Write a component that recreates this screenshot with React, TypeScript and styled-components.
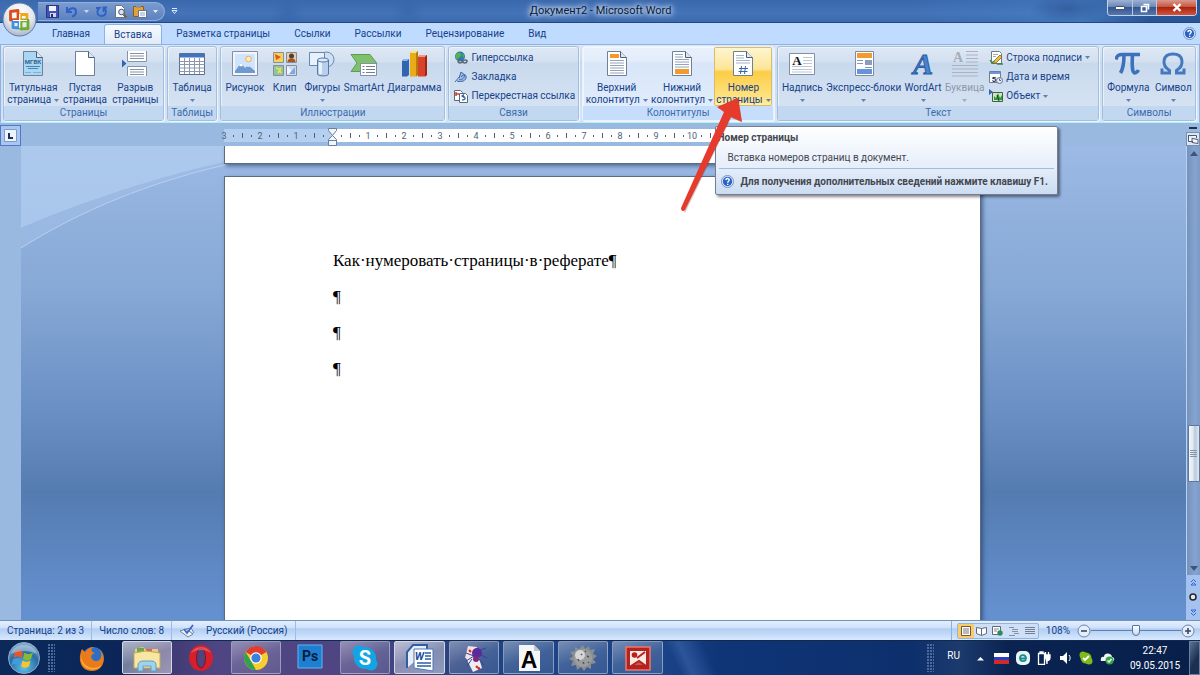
import React from "react";
import styled, { createGlobalStyle, css } from "styled-components";

const Global = createGlobalStyle`
  *, *::before, *::after { box-sizing: border-box; }
  body { margin: 0; background: #6a8fc6; font: 10px/12px Roboto, "Open Sans", sans-serif; color: #15428b; }
  button { font: inherit; color: inherit; background: none; border: 0; padding: 0; margin: 0; cursor: default; }
  a { color: inherit; text-decoration: none; }
  svg { display: block; flex: none; }
`;

/* ---------- window frame ---------- */

const Window = styled.div`
  display: flex;
  flex-direction: column;
  min-height: 100vh;
  overflow: hidden;
`;

const TitleBar = styled.header`
  position: relative;
  display: flex;
  align-items: center;
  height: 23px;
  padding-left: 38px;
  border-bottom: 1px solid #26477c;
  background:
    radial-gradient(ellipse 18px 14px at 24% 60%, #2f5da266, transparent),
    radial-gradient(ellipse 18px 14px at 34% 50%, #2f5da266, transparent),
    radial-gradient(ellipse 40px 14px at 89% 40%, #284f8c99, transparent),
    linear-gradient(90deg, transparent 76%, #4a8ad055 90%, #173e7a88 96%),
    linear-gradient(#3a68ad, #4473b8 60%, #3b69ae);
`;

const OfficeButton = styled.button`
  position: absolute;
  z-index: 3;
  left: 2px;
  top: 2px;
  width: 35px;
  height: 35px;
`;

const QuickAccess = styled.div`
  display: flex;
  align-items: center;
  gap: 6px;
  height: 19px;
  padding: 0 6px 0 8px;
  border: 1px solid #92aede;
  border-left: 0;
  border-radius: 0 10px 10px 0;
  background: linear-gradient(#7c9cce, #5b82bf);
`;

const ToolButton = styled.button`
  display: grid;
  place-items: center;
`;

const Customize = styled(ToolButton)`
  margin-left: 6px;
`;

const Title = styled.h1`
  flex: 1;
  margin: 0 84px 0 0;
  font-size: 11px;
  line-height: 14px;
  font-weight: 400;
  text-align: center;
  color: #0a1a33;
  text-shadow: 0 0 4px #dce8ff, 0 0 6px #dce8ff, 0 0 8px #c5d8fa;
`;

const WindowControls = styled.div`
  display: flex;
  align-self: flex-start;
  margin-right: 3px;
  height: 16px;
  border: 1px solid #c3d3ea;
  border-top: 0;
  border-radius: 0 0 4px 4px;
  overflow: hidden;
`;

const ControlButton = styled.button<{ $wide?: boolean; $danger?: boolean }>`
  display: grid;
  place-items: center;
  width: ${(p) => (p.$wide ? 40 : 24)}px;
  border-left: 1px solid #b9c8df;
  background: ${(p) =>
    p.$danger
      ? "linear-gradient(#d9988c, #c7573f 45%, #a9240f 50%, #d4523b)"
      : "linear-gradient(#9db2d3, #6c88b8 45%, #35568f 50%, #5577ae)"};
  &:first-child { border-left: 0; }
`;

/* ---------- ribbon ---------- */

const TabRow = styled.nav`
  display: flex;
  align-items: stretch;
  height: 21px;
  padding: 0 4px 0 40px;
  background: #bfdbff;
`;

const Tab = styled.button<{ $active?: boolean }>`
  padding: 0 12px;
  line-height: 20px;
  white-space: nowrap;
  ${(p) =>
    p.$active &&
    css`
      position: relative;
      margin: 1px 2px 0;
      padding: 0 9px;
      border: 1px solid #8db2e3;
      border-bottom: 0;
      border-radius: 3px 3px 0 0;
      background: linear-gradient(#f6faff, #e1ebf8);
    `}
`;

const HelpButton = styled.button`
  margin-left: auto;
  align-self: center;
`;

const Ribbon = styled.div`
  display: flex;
  gap: 3px;
  height: 79px;
  padding: 1px 3px 1px 2px;
  border: 1px solid #8db2e3;
  border-bottom: 1px solid #b4f0f2;
  background: linear-gradient(#dbe6f4, #cfddf0 20%, #c8d9ee 22%, #d5e5f6);
`;

const GroupBox = styled.section<{ $w: number; $hot?: boolean }>`
  flex: ${(p) => p.$w} 1 0;
  min-width: 0;
  display: flex;
  flex-direction: column;
  border: 1px solid ${(p) => (p.$hot ? "#e8f2ff" : "#a3bfdf")};
  border-radius: 3px;
  box-shadow: inset 1px 1px 0 #ffffff88, 1px 1px 0 #ffffffaa;
  background: ${(p) =>
    p.$hot
      ? "linear-gradient(#e9f1fb, #e2ecfa 20%, #d8e6f9 22%, #e3eefb)"
      : "linear-gradient(#dee8f5, #d4e0f0 20%, #c9d9ed 22%, #d8e5f4)"};
`;

const GroupBody = styled.div`
  flex: 1;
  display: flex;
  padding: 0 1px;
`;

const GroupLabel = styled.h2<{ $hot?: boolean }>`
  margin: 0;
  font-size: 10px;
  line-height: 14px;
  font-weight: 400;
  text-align: center;
  color: #3e6aaa;
  background: ${(p) => (p.$hot ? "#c6defc" : "#c1d8f0")};
`;

const BigButton = styled.button<{ $w: number; $hot?: boolean; $off?: boolean }>`
  position: relative;
  flex: ${(p) => p.$w} 1 0;
  min-width: 0;
  display: flex;
  flex-direction: column;
  align-items: center;
  padding-top: 3px;
  white-space: nowrap;
  color: ${(p) => (p.$off ? "#8d97a8" : "inherit")};
  ${(p) =>
    p.$hot &&
    css`
      border-radius: 2px;
      box-shadow: inset 0 0 0 1px #d8bc6c;
      background: linear-gradient(#fdf6d2, #fde596 38%, #fccd45 42%, #fee58a 90%, #fff3b0);
    `}
`;

const Caption = styled.span`
  display: flex;
  flex-direction: column;
  align-items: center;
  margin-top: 5px;
`;

const CaptionLine = styled.span`
  display: flex;
  align-items: center;
  justify-content: center;
  gap: 3px;
  height: 12px;
`;

const SmallList = styled.div<{ $w: number }>`
  flex: ${(p) => p.$w} 1 0;
  min-width: 0;
  display: flex;
  flex-direction: column;
  justify-content: space-around;
  padding: 1px 0 0 4px;
`;

const SmallButton = styled.button`
  display: flex;
  align-items: center;
  gap: 3px;
  white-space: nowrap;
`;

const HoverAnchor = styled.div<{ $w: number }>`
  position: relative;
  flex: ${(p) => p.$w} 1 0;
  min-width: 0;
  display: flex;
`;

const Tooltip = styled.div`
  position: absolute;
  z-index: 5;
  top: 79px;
  left: 1px;
  width: 343px;
  padding: 5px 3px 0 1px;
  border: 1px solid #767f92;
  border-radius: 2px;
  box-shadow: 2px 2px 3px #00000077;
  background: linear-gradient(#ffffff, #e6eefa 60%, #cbdcf2);
  color: #45474f;
`;

const TipTitle = styled.strong`
  display: block;
  line-height: 12px;
`;

const TipText = styled.p`
  margin: 8px 0 0 10px;
  line-height: 12px;
`;

const TipFoot = styled.div`
  display: flex;
  align-items: center;
  gap: 6px;
  height: 26px;
  margin: 4px 0 0 2px;
  padding: 0 2px;
  border-top: 1px solid #a3bbdc;
  font-weight: 700;
  white-space: nowrap;
`;

const Pointer = styled.svg`
  position: absolute;
  z-index: 6;
  top: 50px;
  left: -35px;
  pointer-events: none;
`;

/* ---------- workspace ---------- */

const Workspace = styled.main`
  flex: 1;
  display: grid;
  grid-template-columns: 21px 1fr 14px;
  grid-template-rows: 23px 1fr;
  background: #9ab9e0;
`;

const Corner = styled.button`
  align-self: end;
  display: grid;
  place-items: center;
  height: 21px;
  border: 1px solid #5577c7;
  background: #a9c6ee;
`;

const RulerTrack = styled.div`
  display: flex;
  justify-content: center;
  align-items: center;
  padding: 2px 2px 0 0;
`;

const Ruler = styled.div`
  display: flex;
  align-items: center;
  width: 758px;
  height: 13px;
  background: linear-gradient(90deg, #b5cff0 108px, #ffffff 108px);
  color: #4d5f7a;
  font-size: 9px;
`;

const RulerCells = styled.div`
  position: relative;
  display: flex;
  margin-left: -4px;
`;

const Cell = styled.span`
  flex: none;
  display: grid;
  grid-template-columns: repeat(4, 9px);
  place-items: center;
`;

const Num = styled.span`
  display: flex;
  justify-content: center;
  width: 9px;
`;

const Tick = styled.i<{ $tall?: boolean }>`
  width: 1px;
  height: ${(p) => (p.$tall ? 5 : 2)}px;
  background: #50617c;
`;

const Indent = styled.svg`
  position: absolute;
  left: 108px;
  top: -2px;
`;

const SideRuler = styled.div`
  background: #9ab9e0;
`;

const Canvas = styled.div`
  position: relative;
  display: flex;
  flex-direction: column;
  align-items: center;
  gap: 12px;
  padding-right: 2px;
  overflow: hidden;
  background: linear-gradient(#9cbae5, #93b2de 12%, #87a9d6 30%, #6b90c5 55%, #557cb1 73%, #6490cf 98%);
`;

const Swoosh = styled.svg`
  position: absolute;
  left: 0;
  top: 0;
`;

const Sheet = styled.article<{ $tail?: boolean }>`
  position: relative;
  width: 757px;
  max-width: 100%;
  border: 1px solid #5c6b82;
  background: #fff;
  box-shadow: 2px 2px 4px #1d355e99;
  ${(p) =>
    p.$tail
      ? css`
          height: 18px;
          border-top: 0;
        `
      : css`
          flex: 1;
          border-bottom: 0;
          padding: 66px 108px 0;
        `}
`;

const Paragraph = styled.p`
  margin: 0;
  font: 17px/36px "Liberation Serif", serif;
  color: #000;
`;

const ScrollColumn = styled.div`
  display: flex;
  flex-direction: column;
  background: #a5c2ee;
`;

const ScrollTop = styled.div`
  display: flex;
  flex-direction: column;
  align-items: center;
  justify-content: flex-end;
  gap: 3px;
`;

const SplitBar = styled.i`
  width: 8px;
  height: 2px;
  background: #25324a;
`;

const RulerToggle = styled.button`
  display: grid;
  place-items: center;
  width: 14px;
  height: 14px;
  border: 1px solid #7c8fb0;
  background: #dbe6f5;
`;

const ScrollTrack = styled.div`
  flex: 1;
  display: flex;
  flex-direction: column;
  align-items: center;
  border-left: 1px solid #b9d2f2;
  background: linear-gradient(90deg, #7592bd, #85a3d0 60%, #7d9ac5);
`;

const Arrow = styled.button`
  display: grid;
  place-items: center;
  width: 13px;
  height: 14px;
`;

const Spacer = styled.i<{ $grow: number }>`
  flex: ${(p) => p.$grow} 1 0;
`;

const Thumb = styled.div`
  display: grid;
  place-items: center;
  width: 12px;
  height: 57px;
  border: 1px solid #5d779f;
  border-radius: 1px;
  background: linear-gradient(90deg, #f4f7fb, #dfe7f0 40%, #b9c8da 60%, #dfe9f4);
`;

const BrowseButtons = styled.div`
  display: flex;
  flex-direction: column;
  align-items: center;
  justify-content: space-around;
  height: 45px;
`;

/* ---------- status bar ---------- */

const StatusBar = styled.footer`
  display: flex;
  align-items: stretch;
  height: 20px;
  border-top: 1px solid #7290b8;
  background: linear-gradient(#e3efff, #cfe1fa 35%, #b1cef3 42%, #c7ddf9 75%, #d8e9ff);
`;

const StatusItem = styled.button`
  display: flex;
  align-items: center;
  padding: 0 7px;
  border-right: 1px solid #9dbde6;
  line-height: 18px;
`;

const StatusTools = styled.div`
  display: flex;
  align-items: center;
  margin-left: auto;
  padding: 0 5px;
  border-left: 1px solid #8fb0dc;
`;

const ViewButtons = styled.div`
  display: flex;
  border: 1px solid #93b4de;
  border-radius: 2px;
  background: #cfe0f6;
`;

const ViewButton = styled.button<{ $on?: boolean }>`
  display: grid;
  place-items: center;
  width: 16px;
  height: 14px;
  background: ${(p) => (p.$on ? "#fbcb6b" : "transparent")};
`;

const ZoomLevel = styled.button`
  margin: 0 7px;
`;

const ZoomSlider = styled.input`
  width: 90px;
  height: 14px;
  margin: 0;
  appearance: none;
  background: linear-gradient(#5f80b0, #5f80b0) center / 100% 1px no-repeat;
  &::-webkit-slider-thumb {
    appearance: none;
    width: 8px;
    height: 11px;
    border: 1px solid #56749f;
    border-radius: 1px 1px 4px 4px;
    background: linear-gradient(#fff, #c5d6ee);
  }
`;

/* ---------- taskbar ---------- */

const Taskbar = styled.div`
  display: flex;
  align-items: stretch;
  height: 35px;
  border-top: 1px solid #10294d;
  color: #fff;
  background:
    linear-gradient(65deg, transparent 56%, #3f68b088 57%, transparent 59%),
    linear-gradient(90deg, #0b2a5b, #0b2558 10%, #3b376f 13%, #4f4583 18%, #4f4583 30%, #31437f 36%, #1d4484 42%, #1c4488 55%, #0f3577 60%, #0d2f6c 76%, #1c3a6d 80%, #0a2351 84%, #081f4a);
`;

const StartButton = styled.button`
  width: 48px;
  display: grid;
  place-items: center;
`;

const Grip = styled.i`
  align-self: center;
  width: 7px;
  height: 28px;
  background: radial-gradient(circle at 1px 1px, #4c6a9c 1px, transparent 1px) 0 0 / 3px 3px;
`;

const TaskItems = styled.div`
  display: grid;
  grid-template-columns: repeat(11, 1fr);
  width: 50%;
  margin-left: 10px;
`;

const TaskButton = styled.button<{ $framed?: boolean; $lit?: boolean }>`
  display: grid;
  place-items: center;
  margin: 0 2px 1px;
  border-radius: 2px;
  border: 1px solid transparent;
  ${(p) =>
    p.$framed &&
    css`
      border-color: #a9b5d3aa;
      background: linear-gradient(160deg, #ffffff66, #ffffff2a 50%, #ffffff1c);
    `}
  ${(p) =>
    p.$lit &&
    css`
      border-color: #d3d6e6;
      background: linear-gradient(160deg, #ffffffa8, #ffffff66 50%, #ffffff77);
    `}
`;

const Tray = styled.div`
  display: flex;
  align-items: center;
  gap: 7px;
  margin-left: auto;
`;

const Language = styled.button`
  margin: 0 6px 4px;
`;

const Clock = styled.time`
  display: flex;
  flex-direction: column;
  align-items: center;
  width: 60px;
  margin: 0 -3px 0 3px;
  font-size: 10px;
  line-height: 15px;
`;

const ShowDesktop = styled.button`
  align-self: stretch;
  width: 11px;
  border: 1px solid #6b7f9e;
  background: linear-gradient(120deg, #5d7393, #1a2f52 60%);
`;

/* ---------- drawings ---------- */

const Caret = ({ c = "#5d82b8" }: { c?: string }) => (
  <svg width="5" height="3" viewBox="0 0 5 3"><path d="M0 0h5L2.500 3z" fill={c} /></svg>
);

const SheetShape = ({ fill = "#fff" }: { fill?: string }) => (
  <>
    <path d="M3.500 1.500h13l6 6v18h-19z" fill={fill} stroke="#6f8099" />
    <path d="M16.500 1.500v6h6" fill="#dfe7f2" stroke="#4d5d78" />
  </>
);

const Box26 = ({ children }: { children: React.ReactNode }) => (
  <svg width="26" height="27" viewBox="0 0 26 27">{children}</svg>
);

const icons = {
  cover: (
    <Box26>
      <SheetShape fill="#a9d6f3" />
      <text x="13" y="14" fontSize="6" fontWeight="700" textAnchor="middle" fill="#33638f">МГВК</text>
      <path d="M6 16.500h14M8 18.500h10" stroke="#4c85b3" />
      <path d="M5 22.500h6M13 22.500h8" stroke="#7db4da" />
    </Box26>
  ),
  blank: <Box26><SheetShape /></Box26>,
  pageBreak: (
    <Box26>
      <path d="M5.500 1v10.500h19V1M5.500 26V16.500h19V26" fill="#fff" stroke="#8794a8" />
      <path d="M8 3.500h14M8 6h14M8 8.500h14M8 19.500h14M8 22h14M8 24.500h14" stroke="#8292aa" />
      <path d="M0 9.500l4.500 4-4.500 4z" fill="#2d66b4" />
    </Box26>
  ),
  table: (
    <Box26>
      <path d="M.5 3.500h25v21h-25z" fill="#fff" stroke="#5c6f90" />
      <path d="M1 4h24v3.500H1z" fill="#4272c4" />
      <path d="M.5 11.500h25M.5 14.500h25M.5 18h25M.5 21.500h25M5.500 8v16M10.500 8v16M15.500 8v16M20.500 8v16" stroke="#8a97ae" />
    </Box26>
  ),
  picture: (
    <Box26>
      <path d="M.5 1.500h25v24H.5z" fill="#f2f5fa" stroke="#8090aa" />
      <path d="M3 4h20v19H3z" fill="#cfe5fb" />
      <circle cx="16.500" cy="9" r="2.800" fill="#fff0b8" stroke="#f0a860" />
      <path d="M3 21l6-8 4 5 3-3 7 6v2H3z" fill="#6f99d0" />
      <path d="M7 15.500l2-2.500 2 2.500-2 1zM14.500 16.500l1.500-1.500 2 1.800z" fill="#fff" />
    </Box26>
  ),
  clip: (
    <Box26>
      <path d="M1.500 2.500h10v10h-10z" fill="#f3d35c" stroke="#8b8e96" /><path d="M3 4l6 3-5 3z" fill="#e2531e" />
      <path d="M14.500 2.500h10v10h-10z" fill="#ddd0b8" stroke="#8b8e96" /><circle cx="19.500" cy="6" r="2.500" fill="#5b3d2a" /><path d="M15.500 12c0-5 8-5 8 0z" fill="#a85425" />
      <path d="M1.500 15.500h10v10h-10z" fill="#8bc79a" stroke="#8b8e96" /><path d="M4 18l3 1 2 4M9 18l-3 5" stroke="#f2e05c" strokeWidth="1.500" fill="none" />
      <path d="M14.500 15.500h10v10h-10z" fill="#c7dbf4" stroke="#8b8e96" /><path d="M15 16l8 8h-8z" fill="#eef5fd" /><path d="M23 17v7h-6z" fill="#7fa6de" />
    </Box26>
  ),
  shapes: (
    <Box26>
      <circle cx="17.500" cy="9.500" r="7.500" fill="#cfe0f4" stroke="#6587b4" />
      <path d="M.5 2.500h15v13h-15z" fill="#e7f0fb" stroke="#6587b4" />
      <path d="M8.500 10v14c0 2.500 11 2.500 11 0V10" fill="#b7d0ee" stroke="#5878a6" />
      <path d="M10 11h3v13l-3-.5z" fill="#e8f2fd" />
      <ellipse cx="14" cy="10" rx="5.500" ry="2" fill="#dce9f8" stroke="#5878a6" />
    </Box26>
  ),
  smartArt: (
    <svg width="28" height="27" viewBox="0 0 28 27">
      <path d="M1 4.500h19l7 9h-7l-5 8H1l6-8.500z" fill="#7fc06d" stroke="#5a9d55" />
      <path d="M10.500 13.500h16v12h-16z" fill="#fff" stroke="#8291a8" />
      <path d="M12.500 16.500h2M16 16.500h9M12.500 19.500h2M16 19.500h9M12.500 22.500h2M16 22.500h9" stroke="#6f8096" />
    </svg>
  ),
  chart: (
    <Box26>
      <path d="M1 11l2-2h5v16l-2 1.500H1z" fill="#2f66b0" /><path d="M1 11l2-2h5l-2 2z" fill="#8fb7e8" />
      <path d="M9 3l2-2h6v24l-2 1.500H9z" fill="#e9ac18" /><path d="M9 3l2-2h6l-2 2z" fill="#fde27a" /><path d="M15 3l2-2v24l-2 1.500z" fill="#b87b08" />
      <path d="M17 7l2-2h7v20l-2 1.500h-7z" fill="#d8432a" /><path d="M17 7l2-2h7l-2 2z" fill="#f59a80" /><path d="M24 7l2-2v20l-2 1.500z" fill="#9d2614" />
    </Box26>
  ),
  header: (
    <Box26><SheetShape /><path d="M6 4h9v4H6z" fill="#f39a2e" /><path d="M6 10.500h14M6 13h14M6 15.500h14M6 18h14M6 20.500h14M6 23h14" stroke="#93a3bb" /></Box26>
  ),
  footer: (
    <Box26><SheetShape /><path d="M6 19h14v5H6z" fill="#f39a2e" /><path d="M6 4.500h8M6 7h8M6 9.500h14M6 12h14M6 14.500h14M6 17h14" stroke="#93a3bb" /></Box26>
  ),
  pageNumber: (
    <Box26>
      <SheetShape /><path d="M6 5.500h8M6 8h8M6 10.500h14M6 13h14" stroke="#a5b3c8" />
      <path d="M11.500 16l-1 8M15.500 16l-1 8M9 18.500h9M8.500 21.500h9" stroke="#3867a8" fill="none" />
    </Box26>
  ),
  textBox: (
    <Box26>
      <path d="M.5 3.500h25v21H.5z" fill="#fff" stroke="#8290a6" />
      <path d="M14 7.500h9M14 10.500h9M14 13.500h9M3 16.500h20M3 19.500h20M3 22h20" stroke="#bcc6d6" />
      <text x="8" y="14.500" fontFamily="Liberation Serif, serif" fontWeight="700" fontSize="13" textAnchor="middle" fill="#10131a">A</text>
    </Box26>
  ),
  quickParts: (
    <Box26>
      <path d="M4.500 1.500h18v24h-18z" fill="#fff" stroke="#7d8ba3" />
      <path d="M6 3h15v5H6z" fill="#f39a2e" /><path d="M6 10.500h6M6 13.500h6M14 17.500h7" stroke="#8797b0" />
      <path d="M14 10h7v5h-7z" fill="#8e9db5" /><path d="M6 19h15v5H6z" fill="#6793dd" />
    </Box26>
  ),
  wordArt: (
    <Box26>
      <text x="13" y="24" fontFamily="Liberation Serif, serif" fontStyle="italic" fontWeight="700" fontSize="30" textAnchor="middle" fill="#4a84cc" stroke="#2a5ca5">A</text>
    </Box26>
  ),
  dropCap: (
    <Box26>
      <text x="6" y="12" fontFamily="Liberation Serif, serif" fontWeight="700" fontSize="14" textAnchor="middle" fill="#a5adba">A</text>
      <path d="M14 1.500h12M14 5h12M14 8.500h12M14 12h12M0 15.500h26M0 19h26M0 22.500h26M0 26h26" stroke="#aab3c2" />
    </Box26>
  ),
  pi: (
    <Box26>
      <path d="M1 9.500C2 5 4 4.500 7 4.500h18M9 5c0 8-1 14-3.500 18M17.500 5c-.5 8-.5 13 .5 16s4 2 5.500-1" fill="none" stroke="#3b72bb" strokeWidth="3.600" />
    </Box26>
  ),
  omega: (
    <Box26>
      <path d="M2 18.500V23h7.500v-2.500C1 15 2.500 4 13 4s12 11 3.500 16.500V23H24v-4.500" fill="none" stroke="#4479c0" strokeWidth="3" />
    </Box26>
  ),
};

const S16 = ({ children }: { children: React.ReactNode }) => (
  <svg width="14" height="14" viewBox="0 0 14 14">{children}</svg>
);

const small = {
  link: (
    <S16>
      <circle cx="6" cy="5.500" r="5" fill="#2f7fae" /><path d="M3 2c3-1 5 1 4 3s-3 1-4 4c-2-2-2-5 0-7zM8 3l2.500 1-1 3z" fill="#58b24c" />
      <path d="M4 10.500c1-2 4-2 4.500 0s4 2 4.500 0-3-2-4.500 0-4 2-4.500 0z" fill="none" stroke="#5a6577" strokeWidth="1.500" />
    </S16>
  ),
  bookmark: (
    <S16><path d="M1 12l5-6M3 11c2 1 8 1 9-3s-3-4-5-1M5 9c1 2 5 0 6-4L7 2 5 8" fill="#9fbbe4" stroke="#3c66ac" /></S16>
  ),
  crossRef: (
    <S16>
      <path d="M.5 1.500h6l2 2v8h-8z" fill="#fff" stroke="#5e6978" /><path d="M5.500 4.500h6l2 2v7h-8z" fill="#fff" stroke="#5e6978" />
      <path d="M2 3v4M2 5h3" stroke="#d23a2a" strokeWidth="1.500" /><path d="M8 11c4 0 4-3 1-4M10 5.500L8 7l2 1.500" fill="none" stroke="#2a5cae" strokeWidth="1.200" />
    </S16>
  ),
  signature: (
    <S16>
      <path d="M2.500.5h8l2 2v10h-10z" fill="#fff" stroke="#6f7a8b" /><path d="M4 3.500h5M4 5.500h3" stroke="#9dabc0" />
      <path d="M5 10l6-6 2 2-6 6-2.500.5z" fill="#f1bd35" stroke="#665522" strokeWidth=".7" /><path d="M1 9l2 3 2-2M8 13h6" stroke="#37864a" fill="none" strokeWidth="1.300" />
    </S16>
  ),
  date: (
    <S16>
      <path d="M.5 1.500h11v11H.5z" fill="#fff" stroke="#6a7fa5" /><path d="M1 2h10v2H1z" fill="#6f97d8" />
      <text x="5" y="11.500" fontSize="8" fontWeight="700" textAnchor="middle" fill="#1d2c4a">5</text>
      <circle cx="10.500" cy="10.500" r="3" fill="#e5eefb" stroke="#5f7292" /><path d="M10.500 8.500v2H12" stroke="#33435f" fill="none" strokeWidth=".8" />
    </S16>
  ),
  object: (
    <S16>
      <path d="M3.500 3.500h10v9h-10z" fill="#cfe3c7" stroke="#41603f" /><path d="M0 0l4 3-4 3z" fill="#2f64b4" />
      <path d="M5 11V7l2 2 2-5 2 5 2-3v5z" fill="#2f9a3b" /><path d="M8 6l2 6" stroke="#18421d" />
    </S16>
  ),
};

const HelpIcon = ({ size = 13 }: { size?: number }) => (
  <svg width={size} height={size} viewBox="0 0 14 14">
    <circle cx="7" cy="7" r="6.500" fill="#dbe8fb" stroke="#7590bd" /><circle cx="7" cy="7" r="5" fill="#2a62c8" />
    <path d="M5.200 5.500c.2-2.500 3.800-2.200 3.600.1C8.700 6.800 7.200 6.700 7.200 8.300M7.200 9.300v1.500" stroke="#fff" strokeWidth="1.500" fill="none" />
  </svg>
);

const OfficeLogo = () => (
  <svg width="35" height="35" viewBox="0 0 35 35">
    <defs>
      <radialGradient id="orb" cx="50%" cy="30%" r="70%"><stop offset="0" stopColor="#fff" /><stop offset=".6" stopColor="#e3e7ef" /><stop offset="1" stopColor="#aab5c8" /></radialGradient>
    </defs>
    <circle cx="17.500" cy="17.500" r="16.500" fill="url(#orb)" stroke="#5f7ba8" />
    <g fill="none" strokeWidth="2.800" strokeLinejoin="round">
      <path d="M8.500 9.500l7.500-1v9l-7.500.5z" stroke="#dd4a1b" /><path d="M18.500 12.500h6.500V18h-6.500z" stroke="#f3a51d" />
      <path d="M11 19.500h6v6.500l-6-.5z" stroke="#3f8fdc" /><path d="M19 19l7-.5v8l-7 .5z" stroke="#6fae2c" />
    </g>
    <path d="M17.700 12v14M11 18.500h14" stroke="#fff" strokeWidth="1.200" />
  </svg>
);

/* ---------- pieces ---------- */

type BigProps = {
  w: number; icon: React.ReactNode; lines: string[]; drop?: boolean; hot?: boolean; off?: boolean;
};

const Big = ({ w, icon, lines, drop, hot, off }: BigProps) => {
  const inline = drop && lines.length > 1;
  return (
    <BigButton $w={w} $hot={hot} $off={off} type="button">
      {icon}
      <Caption>
        {lines.map((l, i) => (
          <CaptionLine key={l}>{l}{inline && i === lines.length - 1 && <Caret />}</CaptionLine>
        ))}
        {drop && !inline && <CaptionLine><Caret c={off ? "#a5adba" : undefined} /></CaptionLine>}
      </Caption>
    </BigButton>
  );
};

const Group = ({ w, label, hot, children }: { w: number; label: string; hot?: boolean; children: React.ReactNode }) => (
  <GroupBox $w={w} $hot={hot}>
    <GroupBody>{children}</GroupBody>
    <GroupLabel $hot={hot}>{label}</GroupLabel>
  </GroupBox>
);

const Small = ({ icon, label, drop }: { icon: React.ReactNode; label: string; drop?: boolean }) => (
  <SmallButton type="button">{icon}{label}{drop && <Caret />}</SmallButton>
);

const tabs = ["Главная", "Вставка", "Разметка страницы", "Ссылки", "Рассылки", "Рецензирование", "Вид"];
const marks = ["3", "2", "1", "", "1", "2", "3", "4", "5", "6", "7", "8", "9", "10"];

const taskIcons: { name: string; framed?: boolean; lit?: boolean; art: React.ReactNode }[] = [
  { name: "Firefox", art: (
    <><circle cx="15" cy="14" r="11" fill="#2d6fc4" /><path d="M4 5l3 3c2-3 5-5 9-5-4 2-3 5 1 6-3 1-5 3-3 6 3 4 9 2 9-3 1 1 0-5-2-7 8 6 6 22-7 22C3 27-1 16 4 5z" fill="#ea7a1c" /><path d="M3 12c1 10 12 16 21 9-6 8-22 6-21-9z" fill="#f7b735" /></>
  ) },
  { name: "Explorer", framed: true, lit: true, art: (
    <><path d="M2 5l8-2 2 2h13v19H2z" fill="#e9cf7b" /><path d="M4 4h7v4H4z" fill="#6aa84f" /><path d="M13 5h6v3h-6z" fill="#d46a4a" /><path d="M1 9l12-2 14 2v15H1z" fill="#f7e6a4" stroke="#c9a94e" /><path d="M5 27v-6c0-3 3-4 5-4h8c3 0 5 1 5 4v6h-5v-5h-8v5z" fill="#9fd2ee" stroke="#5f9fc6" /></>
  ) },
  { name: "Opera", art: (
    <><ellipse cx="14" cy="14" rx="12" ry="13" fill="#d3202c" /><ellipse cx="14" cy="14" rx="4.500" ry="10" fill="#4d4480" stroke="#8d1019" /><path d="M4 9C8 1 20 1 24 9 18 5 10 5 4 9z" fill="#f07078" fillOpacity=".6" /></>
  ) },
  { name: "Chrome", framed: true, art: (
    <><circle cx="14" cy="14" r="12" fill="#f6cf2e" /><path d="M14 14L3.600 8A12 12 0 0 1 24.400 8z" fill="#dc3f30" /><path d="M14 2a12 12 0 0 1 10.400 6H14z" fill="#dc3f30" /><path d="M3.600 8L9 17l5 9A12 12 0 0 1 3.600 8z" fill="#35a150" /><circle cx="14" cy="14" r="5.800" fill="#fff" /><circle cx="14" cy="14" r="4.600" fill="#3f7fdc" /></>
  ) },
  { name: "Photoshop", art: (
    <><path d="M2 1h24v23H2z" fill="#1e7fd0" stroke="#5eb4f4" /><text x="14" y="17" fontSize="14" fontWeight="700" textAnchor="middle" fill="#06203f">Ps</text></>
  ) },
  { name: "Skype", framed: true, art: (
    <><circle cx="14" cy="14" r="11" fill="#12a5e6" /><circle cx="8" cy="8" r="6.500" fill="#12a5e6" /><circle cx="20" cy="20" r="6.500" fill="#12a5e6" /><text x="14" y="21" fontSize="20" fontWeight="700" textAnchor="middle" fill="#fff">S</text></>
  ) },
  { name: "Word", framed: true, lit: true, art: (
    <><path d="M1 24V8l6-7h14v6" fill="#e6eefa" stroke="#2e5ea8" strokeWidth="2" /><path d="M8 5h19v22L8 24z" fill="#fff" stroke="#5079b8" /><path d="M19 9h6M19 12h6M19 15h6M11 19h14M11 22h14" stroke="#2e5ea8" strokeWidth="1.600" /><text x="13.500" y="16" fontSize="11" fontWeight="700" fontStyle="italic" textAnchor="middle" fill="#1f4e9c">W</text></>
  ) },
  { name: "Solitaire", framed: true, art: (
    <><path d="M8 2l9 1-2 12-10-1z" fill="#f4dfe2" /><path d="M6 14l11-6 5 16-9 4z" fill="#ececf2" /><circle cx="17" cy="9" r="5" fill="#5a2a9a" /><circle cx="16" cy="15" r="3" fill="#7a2a7a" /><path d="M6 9l8 3-8 5M20 6l6-2M21 11l6 3M19 15l5 6M12 15l-5 7" stroke="#3c3f97" fill="none" /><path d="M9 6l2 2M16 22l2 2M18 25l2-1" stroke="#d22" strokeWidth="2" /></>
  ) },
  { name: "Font editor", framed: true, art: (
    <><path d="M4 1h15l6 6v20H4z" fill="#f5f6f8" /><path d="M19 1v6h6z" fill="#c2c7cf" /><text x="14" y="24" fontFamily="Liberation Sans, sans-serif" fontSize="23" fontWeight="700" textAnchor="middle" fill="#000">A</text></>
  ) },
  { name: "Minesweeper", framed: true, art: (
    <><path d="M14 1l2 4 4-3 1 4 5-1-2 5 4 2-4 3 3 4-5 1v5l-4-2-3 4-3-4-4 3-1-5-5 1 2-5-4-2 4-3-3-4 5-1V3l4 2z" fill="#8b8e90" /><circle cx="14" cy="14" r="9" fill="#9b9d9f" /><circle cx="11" cy="11" r="5" fill="#d5d6d6" /><path d="M9 15l1 2M14 18l1 2M18 12l2 1M16 7l1 1M20 18l-1 1M12 10l1 1" stroke="#555" strokeWidth="1.500" /></>
  ) },
  { name: "Draughts", framed: true, art: (
    <><path d="M2 3h24v23H2z" fill="#b5231f" stroke="#e7796f" strokeWidth="1.500" /><path d="M6 7h16v15H6z" fill="#fbe9e4" /><circle cx="10.500" cy="11" r="2.800" fill="#b5231f" /><path d="M13 14l8-6M7 22l8-5 7 5z" stroke="#b5231f" strokeWidth="2" fill="#d0564c" /></>
  ) },
];

const Tip = () => (
  <Tooltip role="tooltip">
    <TipTitle>Номер страницы</TipTitle>
    <TipText>Вставка номеров страниц в документ.</TipText>
    <TipFoot><HelpIcon />Для получения дополнительных сведений нажмите клавишу F1.</TipFoot>
  </Tooltip>
);

export default function App() {
  return (
    <Window>
      <Global />
      <TitleBar>
        <OfficeButton type="button" aria-label="Office"><OfficeLogo /></OfficeButton>
        <QuickAccess>
          <ToolButton type="button" aria-label="Сохранить">
            <svg width="13" height="13" viewBox="0 0 13 13"><path d="M.5.5h12v12h-12z" fill="#4350b8" stroke="#2b347f" /><path d="M3 1h7v5H3z" fill="#f2f4fb" /><path d="M4 8h6v4H4z" fill="#cfd4ea" /><path d="M5 9h2v3H5z" fill="#27306f" /></svg>
          </ToolButton>
          <ToolButton type="button" aria-label="Отменить">
            <svg width="13" height="13" viewBox="0 0 13 13"><path d="M2 2v5h5M2.500 6.500C5 2 11 2 11 6.500c0 3-2 4.500-4 5" fill="none" stroke="#2f62c8" strokeWidth="2" /></svg>
          </ToolButton>
          <Caret c="#c7d8f4" />
          <ToolButton type="button" aria-label="Повторить">
            <svg width="13" height="13" viewBox="0 0 13 13"><path d="M1 3h3.500C1 6 2 11 6.500 11S12.500 6 9 3M8.500 7V2.500H12" fill="none" stroke="#2f62c8" strokeWidth="1.800" /></svg>
          </ToolButton>
          <ToolButton type="button" aria-label="Просмотр">
            <svg width="13" height="13" viewBox="0 0 13 13"><path d="M1.500.5h6l3 3v9h-9z" fill="#fff" stroke="#66738a" /><circle cx="7.500" cy="7" r="2.800" fill="#cfe2f8" stroke="#4a566b" /><path d="M9.500 9.500l3 3" stroke="#8a5a22" strokeWidth="2" /></svg>
          </ToolButton>
          <ToolButton type="button" aria-label="Вставить">
            <svg width="14" height="14" viewBox="0 0 14 14"><path d="M.5 2.500h10v10H.5z" fill="#e0a23a" stroke="#8a5f1c" /><path d="M3 1h5v3H3z" fill="#8d93a0" /><path d="M5.500 6.500h8v7h-8z" fill="#fff" stroke="#66738a" /><path d="M7 9h5M7 11h5" stroke="#8fa3c2" /></svg>
          </ToolButton>
          <Caret c="#e3ecfb" />
        </QuickAccess>
        <Customize type="button" aria-label="Настройка панели">
          <svg width="7" height="6" viewBox="0 0 7 6"><path d="M1 .5h5M1 2.500h5L3.500 5.500z" fill="none" stroke="#dbe7fb" /></svg>
        </Customize>
        <Title>Документ2 - Microsoft Word</Title>
        <WindowControls>
          <ControlButton type="button" aria-label="Свернуть"><svg width="10" height="4"><path d="M.5.5h9v3h-9z" fill="#fff" stroke="#46546e" /></svg></ControlButton>
          <ControlButton type="button" aria-label="Развернуть"><svg width="10" height="10"><path d="M3.500 1.500h5v5M1.500 3.500h5v5h-5z" fill="none" stroke="#fff" strokeWidth="1.600" /></svg></ControlButton>
          <ControlButton type="button" aria-label="Закрыть" $wide $danger><svg width="10" height="9"><path d="M1.500 1l7 7M8.500 1l-7 7" stroke="#fff" strokeWidth="2.400" /></svg></ControlButton>
        </WindowControls>
      </TitleBar>

      <TabRow>
        {tabs.map((t) => <Tab key={t} type="button" $active={t === "Вставка"}>{t}</Tab>)}
        <HelpButton type="button" aria-label="Справка"><HelpIcon /></HelpButton>
      </TabRow>

      <Ribbon>
        <Group w={161} label="Страницы">
          <Big w={56} icon={icons.cover} lines={["Титульная", "страница"]} drop />
          <Big w={47} icon={icons.blank} lines={["Пустая", "страница"]} />
          <Big w={53} icon={icons.pageBreak} lines={["Разрыв", "страницы"]} />
        </Group>
        <Group w={49} label="Таблицы">
          <Big w={45} icon={icons.table} lines={["Таблица"]} drop />
        </Group>
        <Group w={226} label="Иллюстрации">
          <Big w={45} icon={icons.picture} lines={["Рисунок"]} />
          <Big w={34} icon={icons.clip} lines={["Клип"]} />
          <Big w={41} icon={icons.shapes} lines={["Фигуры"]} drop />
          <Big w={42} icon={icons.smartArt} lines={["SmartArt"]} />
          <Big w={58} icon={icons.chart} lines={["Диаграмма"]} />
        </Group>
        <Group w={130} label="Связи">
          <SmallList $w={1}>
            <Small icon={small.link} label="Гиперссылка" />
            <Small icon={small.bookmark} label="Закладка" />
            <Small icon={small.crossRef} label="Перекрестная ссылка" />
          </SmallList>
        </Group>
        <Group w={193} label="Колонтитулы" hot>
          <Big w={66} icon={icons.header} lines={["Верхний", "колонтитул"]} drop />
          <Big w={65} icon={icons.footer} lines={["Нижний", "колонтитул"]} drop />
          <HoverAnchor $w={58}>
            <Big w={1} icon={icons.pageNumber} lines={["Номер", "страницы"]} drop hot />
            <Tip />
            <Pointer width="64" height="116" viewBox="0 0 64 116" aria-hidden="true">
              <path d="M5 115L51 20l11 4L59 2 37 9l8 5L3 112z" fill="#00000033" transform="translate(1 1)" />
              <path d="M2 111c0 3 2 4 4 2L52 20l11 5L59 1 38 10l7 5z" fill="#e53a2c" />
            </Pointer>
          </HoverAnchor>
        </Group>
        <Group w={324} label="Текст">
          <Big w={47} icon={icons.textBox} lines={["Надпись"]} drop />
          <Big w={78} icon={icons.quickParts} lines={["Экспресс-блоки"]} drop />
          <Big w={43} icon={icons.wordArt} lines={["WordArt"]} drop />
          <Big w={42} icon={icons.dropCap} lines={["Буквица"]} drop off />
          <SmallList $w={110}>
            <Small icon={small.signature} label="Строка подписи" drop />
            <Small icon={small.date} label="Дата и время" />
            <Small icon={small.object} label="Объект" drop />
          </SmallList>
        </Group>
        <Group w={93} label="Символы">
          <Big w={48} icon={icons.pi} lines={["Формула"]} drop />
          <Big w={41} icon={icons.omega} lines={["Символ"]} drop />
        </Group>
      </Ribbon>

      <Workspace>
        <Corner type="button" aria-label="Табуляция">
          <svg width="13" height="13" viewBox="0 0 13 13"><path d="M.5.5h12v12H.5z" fill="#eef4fd" stroke="#7f9cd0" /><path d="M5 4v5h4" fill="none" stroke="#1c2f58" strokeWidth="2" /></svg>
        </Corner>
        <RulerTrack>
          <Ruler>
            <RulerCells>
              {marks.map((m, i) => (
                <Cell key={i}><Num>{m}</Num><Tick /><Tick $tall /><Tick /></Cell>
              ))}
              <Indent width="9" height="18" viewBox="0 0 9 18">
                <path d="M.5.5h8v2L4.500 7.500.5 2.500zM4.500 7.500l4 4v6h-8v-6zM.5 12.500h8" fill="#f1f5fc" stroke="#6b7f9f" />
              </Indent>
            </RulerCells>
          </Ruler>
        </RulerTrack>
        <ScrollTop>
          <SplitBar />
          <RulerToggle type="button" aria-label="Линейка">
            <svg width="11" height="10" viewBox="0 0 11 10"><path d="M.5 1v6.500H5M.5 1.500h8V4M4 4.500l6 1v4l-6-1z" fill="#f7faff" stroke="#4b5a75" /></svg>
          </RulerToggle>
        </ScrollTop>

        <SideRuler />
        <Canvas>
          <Swoosh width="204" height="104" viewBox="0 0 204 104" aria-hidden="true">
            <path d="M0 0h204v16C140 30 60 56 0 82z" fill="#b2cdf0" fillOpacity=".75" />
            <path d="M0 82C60 56 140 30 204 16v3C130 36 60 64 0 102z" fill="#a3c0e8" fillOpacity=".55" />
            <path d="M0 102C60 64 130 36 204 19" fill="none" stroke="#b7d0f2" />
          </Swoosh>
          <Sheet $tail />
          <Sheet>
            <Paragraph>Как·нумеровать·страницы·в·реферате¶</Paragraph>
            <Paragraph>¶</Paragraph>
            <Paragraph>¶</Paragraph>
            <Paragraph>¶</Paragraph>
          </Sheet>
        </Canvas>
        <ScrollColumn>
          <ScrollTrack>
            <Arrow type="button" aria-label="Вверх"><svg width="8" height="5"><path d="M0 5h8L4 0z" fill="#3d5478" /></svg></Arrow>
            <Spacer $grow={266} />
            <Thumb><svg width="7" height="8"><path d="M0 .5h7M0 2.500h7M0 4.500h7M0 6.500h7" stroke="#8496ac" /></svg></Thumb>
            <Spacer $grow={79} />
            <Arrow type="button" aria-label="Вниз"><svg width="8" height="5"><path d="M0 0h8L4 5z" fill="#3d5478" /></svg></Arrow>
          </ScrollTrack>
          <BrowseButtons>
            <ToolButton type="button" aria-label="Предыдущая страница"><svg width="7" height="7"><path d="M1 3l2.500-2.500L6 3M1 6l2.500-2.500L6 6z" fill="none" stroke="#2d6be0" /></svg></ToolButton>
            <ToolButton type="button" aria-label="Объект перехода"><svg width="8" height="8"><circle cx="4" cy="4" r="3" fill="#e5e7ea" stroke="#23262b" strokeWidth="1.500" /></svg></ToolButton>
            <ToolButton type="button" aria-label="Следующая страница"><svg width="7" height="7"><path d="M1 1l2.500 2.500L6 1zM1 4l2.500 2.500L6 4" fill="none" stroke="#2d6be0" /></svg></ToolButton>
          </BrowseButtons>
        </ScrollColumn>
      </Workspace>

      <StatusBar>
        <StatusItem type="button">Страница: 2 из 3</StatusItem>
        <StatusItem type="button">Число слов: 8</StatusItem>
        <StatusItem type="button">
          <svg width="27" height="14" viewBox="0 0 27 14"><path d="M1 7l6-2 7 5-5 3zM7 5l5-1 3 5" fill="#eef3fb" stroke="#6e84a8" /><path d="M5 5l3 4 6-8" fill="none" stroke="#3a68c4" strokeWidth="1.800" /></svg>
          Русский (Россия)
        </StatusItem>
        <StatusTools>
          <ViewButtons>
            <ViewButton type="button" aria-label="Разметка" $on><svg width="10" height="10"><path d="M.5.5h9v9h-9z" fill="#fff" stroke="#69583c" /><path d="M2 3h6M2 5h6M2 7h6" stroke="#777" /></svg></ViewButton>
            <ViewButton type="button" aria-label="Чтение"><svg width="11" height="10"><path d="M.5 1.500L5.500 2.500l5-1v6l-5 2-5-2zM5.500 2.500v7" fill="#fff" stroke="#5d6a80" /></svg></ViewButton>
            <ViewButton type="button" aria-label="Веб-документ"><svg width="11" height="10"><path d="M.5.5h8v8h-8z" fill="#fff" stroke="#5d6a80" /><path d="M2 3h5M2 5h3" stroke="#888" /><circle cx="8" cy="7" r="2.700" fill="#2f8a63" /></svg></ViewButton>
            <ViewButton type="button" aria-label="Структура"><svg width="10" height="10"><path d="M0 1.500h5M3 3.500h6M3 5.500h6M5 7.500h5M0 9.500h6" stroke="#8492a8" /></svg></ViewButton>
            <ViewButton type="button" aria-label="Черновик"><svg width="10" height="10"><path d="M0 1.500h10M0 3.500h10M0 5.500h10M0 7.500h10" stroke="#6f7f98" /></svg></ViewButton>
          </ViewButtons>
          <ZoomLevel type="button">108%</ZoomLevel>
          <ToolButton type="button" aria-label="Уменьшить"><svg width="14" height="14"><circle cx="7" cy="7" r="6" fill="#e4edf9" stroke="#6d84a8" /><path d="M4 7h6" stroke="#34496b" strokeWidth="1.600" /></svg></ToolButton>
          <ZoomSlider type="range" aria-label="Масштаб" min={0} max={100} defaultValue={50} />
          <ToolButton type="button" aria-label="Увеличить"><svg width="14" height="14"><circle cx="7" cy="7" r="6" fill="#e4edf9" stroke="#6d84a8" /><path d="M4 7h6M7 4v6" stroke="#34496b" strokeWidth="1.600" /></svg></ToolButton>
        </StatusTools>
      </StatusBar>

      <Taskbar>
        <StartButton type="button" aria-label="Пуск">
          <svg width="34" height="34" viewBox="0 0 34 34">
            <defs><radialGradient id="start" cx="50%" cy="80%" r="80%"><stop offset="0" stopColor="#5cc4ea" /><stop offset=".6" stopColor="#2a6ca6" /><stop offset="1" stopColor="#8fb4d0" /></radialGradient></defs>
            <circle cx="17" cy="17" r="15.500" fill="url(#start)" stroke="#8fa9c3" />
            <path d="M8 11c3-2 5-2 8 0l-1.500 6c-3-2-5-2-8 0z" fill="#e7562a" /><path d="M17.500 11.500c3 2 5 2 8.500 0l-2 6.500c-3 2-5 1.500-8 0z" fill="#84bb35" />
            <path d="M6 18.500c3-2 5-1.500 8 0L12.500 24c-3-1.500-5-1.500-8 0z" fill="#3f9ce0" /><path d="M15.500 19.500c3 2 5 1.500 8 0L22 25.500c-3 1.500-5 1.500-8 0z" fill="#f8c52c" />
            <path d="M4 13C7 1 27 1 30 13 22 9 12 9 4 13z" fill="#ffffff55" />
          </svg>
        </StartButton>
        <Grip />
        <TaskItems>
          {taskIcons.map((t) => (
            <TaskButton key={t.name} type="button" aria-label={t.name} $framed={t.framed} $lit={t.lit}>
              <svg width="28" height="28" viewBox="0 0 28 28">{t.art}</svg>
            </TaskButton>
          ))}
        </TaskItems>
        <Tray>
          <Grip />
          <Language type="button">RU</Language>
          <ToolButton type="button" aria-label="Скрытые значки"><svg width="14" height="5"><path d="M4 4.500h7L7.500 1z" fill="#fff" /></svg></ToolButton>
          <ToolButton type="button" aria-label="Россия"><svg width="15" height="11"><path d="M0 0h15v4H0z" fill="#fff" /><path d="M0 4h15v3H0z" fill="#2d3fc0" /><path d="M0 7h15v4H0z" fill="#d02b2b" /></svg></ToolButton>
          <ToolButton type="button" aria-label="ESET"><svg width="14" height="14"><rect width="14" height="14" rx="5" fill="#e9f6f6" /><path d="M4 7.500h6c0-4.500-6-4.500-6-.5s4 3.500 6 2" fill="none" stroke="#168c93" strokeWidth="1.800" /></svg></ToolButton>
          <ToolButton type="button" aria-label="Питание"><svg width="14" height="14"><path d="M1.500 2.500h6v11h-6zM3 1h3v1H3z" fill="none" stroke="#fff" strokeWidth="1.300" /><path d="M7 4h6v3c0 3-2 2-3 3v3M8.500 1v3M11.500 1v3" fill="#fff" stroke="#fff" strokeWidth="1.300" /></svg></ToolButton>
          <ToolButton type="button" aria-label="Громкость"><svg width="14" height="14"><path d="M2 5h3l4-4v12L5 9H2z" fill="#fff" /><path d="M11 4c1.500 2 1.500 4 0 6" fill="none" stroke="#fff" /></svg></ToolButton>
          <ToolButton type="button" aria-label="Skype"><svg width="14" height="14"><circle cx="7" cy="7" r="5.500" fill="#7cbb1a" /><circle cx="4" cy="4" r="3.500" fill="#7cbb1a" /><circle cx="10" cy="10" r="3.500" fill="#7cbb1a" /><path d="M4 7l2 2 4-4" fill="none" stroke="#fff" strokeWidth="1.800" /></svg></ToolButton>
          <ToolButton type="button" aria-label="Облако"><svg width="15" height="14"><path d="M1 10C0 6 3 5 4 6c0-5 8-4 8 0 3 0 3 5 0 4z" fill="#f2f4f6" /><circle cx="9.500" cy="9.500" r="4" fill="#36a64a" /><path d="M7.500 9.500l1.500 1.500 2.500-3" fill="none" stroke="#fff" strokeWidth="1.200" /></svg></ToolButton>
          <Clock dateTime="2015-05-09T22:47"><span>22:47</span><span>09.05.2015</span></Clock>
          <ShowDesktop type="button" aria-label="Показать рабочий стол" />
        </Tray>
      </Taskbar>
    </Window>
  );
}
